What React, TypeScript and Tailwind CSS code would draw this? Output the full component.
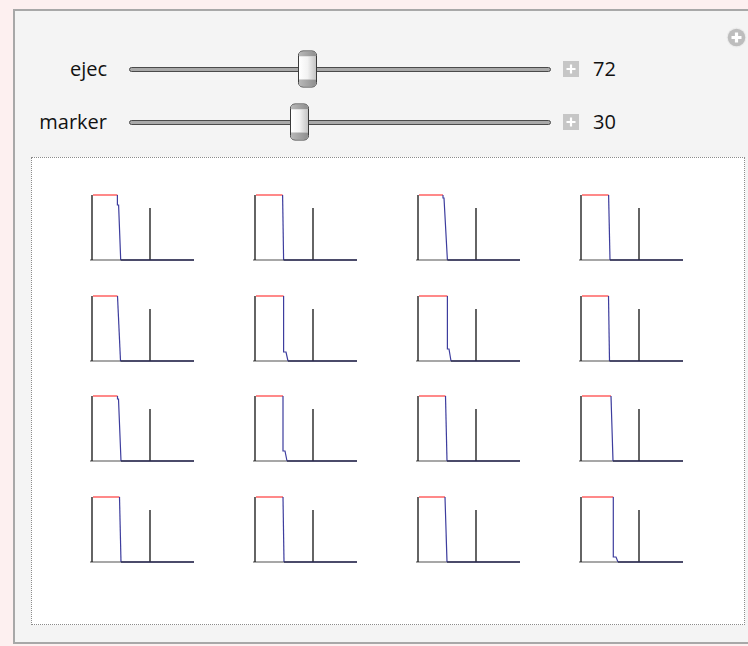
import React from 'react';

type Plot = { r: number; end: number; kind?: 'top' | 'bottom'; k?: number; s?: number };

// offsets are measured from the vertical axis of each small plot
const plots: Plot[] = [
  { r: 25.4, end: 28.7, kind: 'top', k: 10, s: 26.6 },
  { r: 27.6, end: 28.6 },
  { r: 25, end: 29.4, kind: 'top', k: 3, s: 26 },
  { r: 27.6, end: 29 },
  { r: 25.5, end: 28.5 },
  { r: 28.6, end: 33, kind: 'bottom', k: 9, s: 31 },
  { r: 29.4, end: 33, kind: 'bottom', k: 12, s: 31 },
  { r: 27.5, end: 28.5 },
  { r: 25.5, end: 29, kind: 'top', k: 3, s: 26.5 },
  { r: 28, end: 32, kind: 'bottom', k: 10, s: 30 },
  { r: 27.5, end: 29 },
  { r: 30, end: 32 },
  { r: 27.5, end: 29 },
  { r: 28, end: 29 },
  { r: 27, end: 29 },
  { r: 32.3, end: 37, kind: 'bottom', k: 5, s: 35 },
];

const AX = 30;
const TOP = 25;
const BASE = 90;

function dropPath(p: Plot) {
  const x0 = AX + p.r;
  const xe = AX + p.end;
  if (p.kind === 'top') {
    return `M${x0},${TOP} V${TOP + (p.k ?? 0)} H${AX + (p.s ?? 0)} L${xe},${BASE}`;
  }
  if (p.kind === 'bottom') {
    return `M${x0},${TOP} V${BASE - (p.k ?? 0)} H${AX + (p.s ?? 0)} L${xe},${BASE}`;
  }
  return `M${x0},${TOP} L${xe},${BASE}`;
}

function SmallPlot({ p }: { p: Plot }) {
  return (
    <svg width="163" height="101" viewBox="0 0 163 101" className="block">
      <line x1="28" y1={BASE} x2="132" y2={BASE} stroke="#8a8a8a" strokeWidth="1.5" />
      <line x1={AX} y1={TOP} x2={AX} y2={BASE} stroke="#111" strokeWidth="1.3" />
      <line x1={AX + 58} y1={BASE - 52} x2={AX + 58} y2={BASE} stroke="#111" strokeWidth="1.3" />
      <line x1={AX + 1} y1={TOP} x2={AX + p.r} y2={TOP} stroke="#ff4a4a" strokeWidth="1.3" />
      <path d={dropPath(p)} fill="none" stroke="#3d3d9e" strokeWidth="1.2" />
      <line x1={AX + p.end} y1={BASE} x2="132" y2={BASE} stroke="#2c2c56" strokeWidth="1.5" />
    </svg>
  );
}

function Thumb({ left }: { left: number }) {
  return (
    <div
      className="absolute top-1/2 -translate-y-1/2 w-[19px] h-[37px] rounded-[5px] border border-[#3a3a3a] overflow-hidden flex flex-col"
      style={{ left }}
    >
      <div className="h-[5px] bg-linear-to-r from-[#b8b8b8] to-[#8f8f8f]" />
      <div className="flex-1 bg-linear-to-r from-white via-[#f2f2f2] to-[#c4c4c4]" />
      <div className="h-[7px] bg-linear-to-r from-[#b8b8b8] to-[#8f8f8f]" />
    </div>
  );
}

function PlusBox() {
  return (
    <svg width="16" height="16" viewBox="0 0 16 16" className="block">
      <rect width="16" height="16" fill="#c6c6c6" />
      <path d="M8 3.5v9M3.5 8h9" stroke="#fff" strokeWidth="2.2" />
    </svg>
  );
}

function SliderRow({ label, value, thumb }: { label: string; value: string; thumb: number }) {
  return (
    <div className="flex items-center h-[38px]">
      <div className="w-[92px] text-right text-[20px] leading-none text-[#111]">{label}</div>
      <div className="relative ml-[22px] w-[422px] h-[38px] flex items-center">
        <div className="w-full h-[5px] rounded-full border border-[#4a4a4a] bg-[#a9a9a9]" />
        <Thumb left={thumb} />
      </div>
      <div className="ml-[12px]">
        <PlusBox />
      </div>
      <div className="ml-[14px] text-[20px] leading-none text-[#111]">{value}</div>
    </div>
  );
}

export default function App() {
  return (
    <div
      className="w-[748px] h-[646px] overflow-hidden bg-[#fdf0f0] pt-[9px] pl-[13px]"
      style={{ fontFamily: '"Open Sans", "Noto Sans", sans-serif' }}
    >
      <div className="relative w-[745px] h-[635px] border-2 border-[#a8a8a8] bg-[#f4f4f4]">
        {/* top right add button */}
        <svg width="21" height="21" viewBox="0 0 21 21" className="absolute left-[711px] top-[16px]">
          <circle cx="10.5" cy="10.5" r="10" fill="#ececec" />
          <circle cx="10.5" cy="10.5" r="8.8" fill="#bdbdbd" />
          <path d="M10.5 5.5v10M5.5 10.5h10" stroke="#fff" strokeWidth="3.2" />
        </svg>

        <div className="pt-[39px] flex flex-col gap-[15px]">
          <SliderRow label="ejec" value="72" thumb={169} />
          <SliderRow label="marker" value="30" thumb={161} />
        </div>

        <div className="ml-[16px] mt-[16px] w-[714px] h-[468px] border border-dotted border-[#8c8c8c] bg-white">
          <div className="pl-[30px] pt-[12px] grid grid-cols-[repeat(4,163px)] grid-rows-[101px_100px_101px_100px]">
            {plots.map((p, i) => (
              <SmallPlot key={i} p={p} />
            ))}
          </div>
        </div>
      </div>
    </div>
  );
}
